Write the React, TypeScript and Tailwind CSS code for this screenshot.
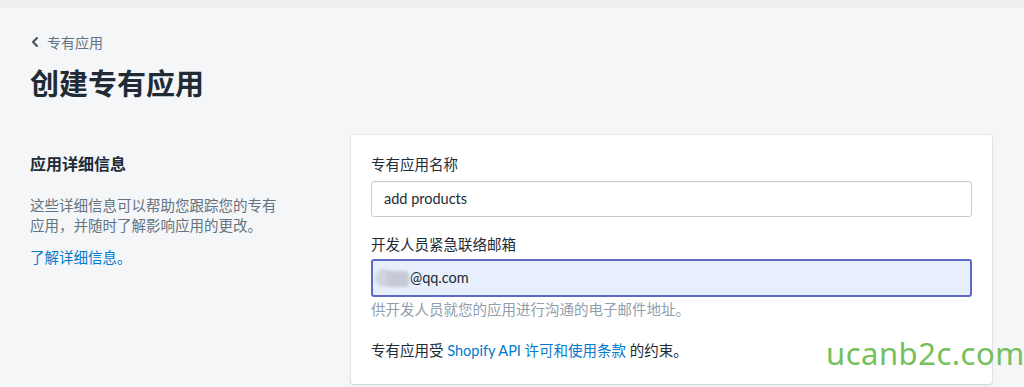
import { ChevronLeft } from 'lucide-react';

const font = "font-['Lato','Noto_Sans_CJK_SC',sans-serif]";

export default function App() {
  return (
    <div className={`relative w-[1024px] h-[387px] overflow-hidden bg-[#f4f6f8] ${font}`}>
      {/* Top strip */}
      <div className="h-2 bg-[#eeeeee]" />

      <div className="px-[30px]">
        {/* Breadcrumb */}
        <div className="flex items-center gap-[4px] h-5 mt-6 text-[14px] text-[#637381]">
          <ChevronLeft size={16} strokeWidth={3} className="text-[#454f5b] -ml-[3px]" />
          <span>专有应用</span>
        </div>

        {/* Title */}
        <h1 className="mt-[14px] h-[36px] leading-[36px] text-[29px] font-bold text-[#212b36]">
          创建专有应用
        </h1>

        <div className="flex mt-[33px]">
          {/* Left: description */}
          <div className="w-[321px] pt-[19px] pr-6">
            <h2 className="text-[16px] leading-5 font-bold text-[#212b36]">应用详细信息</h2>
            <p className="mt-[22px] text-[14.5px] leading-[20px] text-[#637381]">
              这些详细信息可以帮助您跟踪您的专有
              <br />
              应用，并随时了解影响应用的更改。
            </p>
            <a className="block mt-[12px] text-[14.5px] leading-5 text-[#007ace]">了解详细信息。</a>
          </div>

          {/* Right: card */}
          <div className="w-[641px] h-[249px] bg-white rounded-[3px] shadow-[0_0_0_1px_rgba(63,63,68,0.05),0_1px_3px_0_rgba(63,63,68,0.15)] px-5 pt-5">
            <label className="block text-[14.5px] leading-5 text-[#212b36]">专有应用名称</label>
            <div className="mt-[6px] h-[36px] border border-[#c4cdd5] rounded-[3px] flex items-center px-3 text-[14.5px] text-[#212b36] shadow-[inset_0_1px_0_0_rgba(99,115,129,0.05)]">
              add products
            </div>

            <label className="block mt-[18px] text-[14.5px] leading-5 text-[#212b36]">开发人员紧急联络邮箱</label>
            <div className="mt-[4px] h-[38px] border-2 border-[#5c6ac4] rounded-[3px] bg-[#e8effc] flex items-center pl-[2px] text-[14.5px] text-[#212b36]">
              <div className="relative w-[35px] h-[20px]">
                <div className="absolute left-[0px] top-[1px] w-[18px] h-[18px] rounded-full bg-[#d0d4de] blur-[1.5px]" />
                <div className="absolute left-[12px] top-[3px] w-[22px] h-[16px] rounded-[4px] bg-[#c6cad4] blur-[1.5px]" />
              </div>
              <span>@qq.com</span>
            </div>
            <p className="mt-[3px] text-[14.5px] leading-5 text-[#919eab]">供开发人员就您的应用进行沟通的电子邮件地址。</p>

            <p className="mt-[21px] text-[14.5px] leading-5 text-[#212b36]">
              专有应用受 <span className="text-[#007ace]">Shopify API 许可和使用条款</span> 的约束。
            </p>
          </div>
        </div>
      </div>

      {/* Watermark */}
      <div className="absolute left-[826px] top-[331px] text-[31px] leading-[44px] text-[#74c05c] font-['Noto_Sans',sans-serif] tracking-[0.5px]">
        ucanb2c.com
      </div>
    </div>
  );
}
